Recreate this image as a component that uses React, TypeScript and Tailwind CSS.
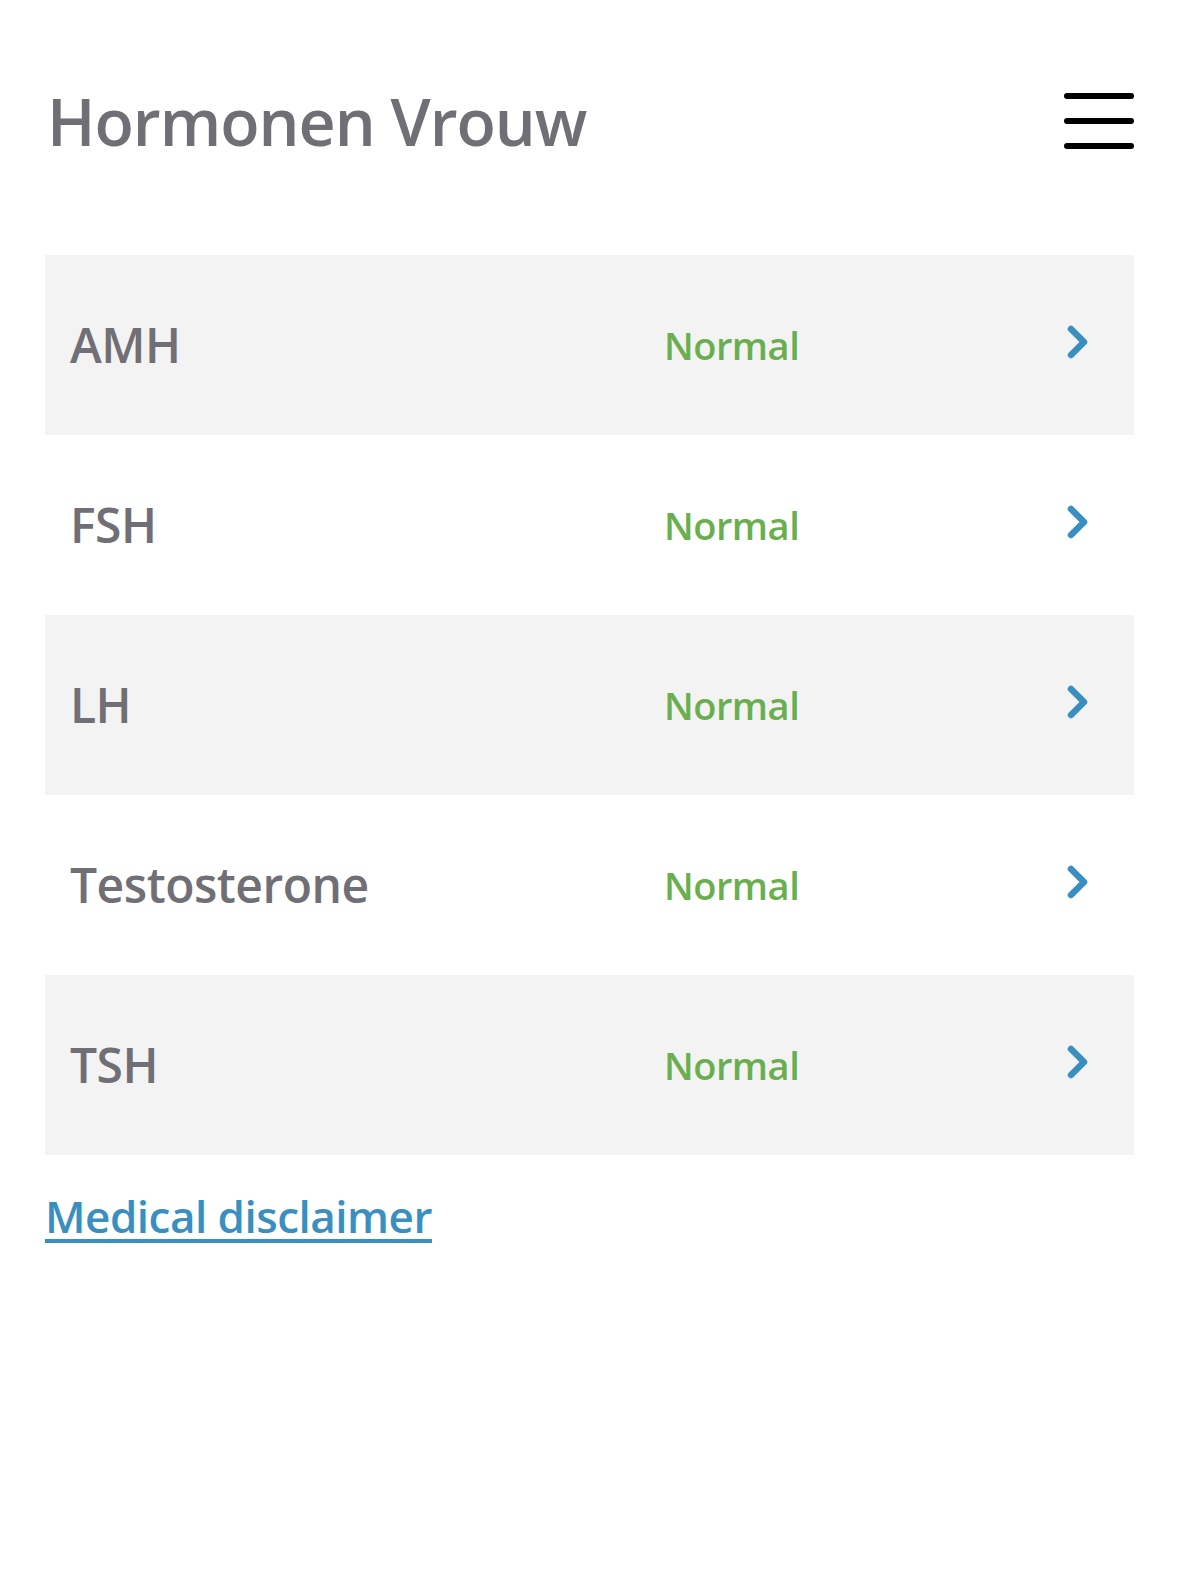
import React from 'react';

const rows = [
  { name: 'AMH', status: 'Normal' },
  { name: 'FSH', status: 'Normal' },
  { name: 'LH', status: 'Normal' },
  { name: 'Testosterone', status: 'Normal' },
  { name: 'TSH', status: 'Normal' },
];

function Chevron() {
  return (
    <svg width="24" height="34" viewBox="0 0 24 34" fill="none">
      <path d="M5 4 L18 17 L5 30" stroke="#3a8fc0" strokeWidth="6.5" strokeLinecap="round" strokeLinejoin="round" />
    </svg>
  );
}

export default function App() {
  return (
    <div className="min-h-[1572px] bg-white px-[45px] pt-[86px]" style={{ fontFamily: '"Open Sans", "Noto Sans", sans-serif' }}>
      <div className="flex items-center justify-between h-[70px]">
        <h1 className="text-[64.5px] font-semibold text-[#6f6f75] tracking-[-1px] leading-none ml-[2px] mt-[1px]">Hormonen Vrouw</h1>
        <div className="flex flex-col gap-[19px] w-[70px]">
          <span className="block h-[6px] rounded-full bg-black" />
          <span className="block h-[6px] rounded-full bg-black" />
          <span className="block h-[6px] rounded-full bg-black" />
        </div>
      </div>

      <div className="mt-[99px] flex flex-col">
        {rows.map((r, i) => (
          <div
            key={r.name}
            className={`flex items-center h-[180px] pl-[25px] ${i % 2 === 0 ? 'bg-[#f3f3f3]' : 'bg-white'}`}
          >
            <span className="w-[594px] text-[48px] font-semibold text-[#6f6f75] tracking-[-0.5px]">{r.name}</span>
            <span className="flex-1 text-[38px] font-semibold text-[#6aaf4f] tracking-[-0.5px]">{r.status}</span>
            <span className="mr-[44px] -mt-[6px]"><Chevron /></span>
          </div>
        ))}
      </div>

      <a href="#" className="mt-[28px] inline-block text-[44px] font-semibold text-[#3a8fc0] underline underline-offset-[6px] decoration-[4px] tracking-[-0.5px]">
        Medical disclaimer
      </a>
    </div>
  );
}
